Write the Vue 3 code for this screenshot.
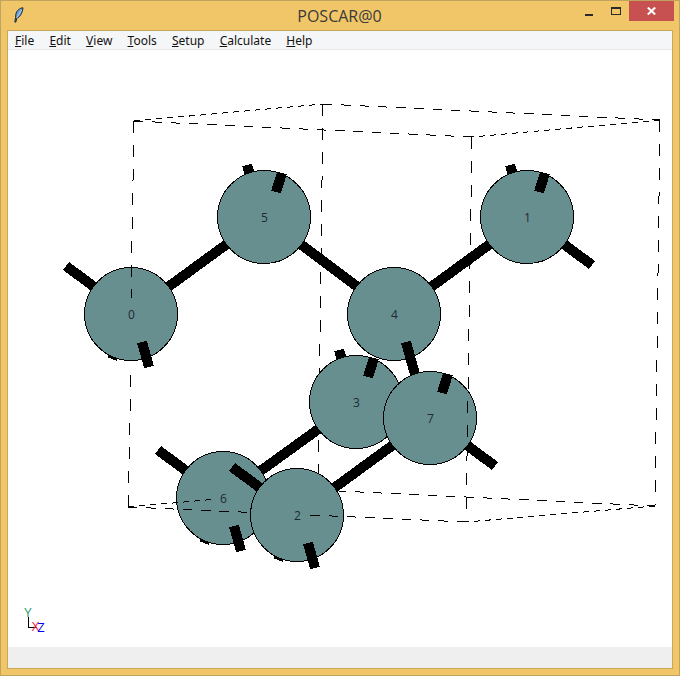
<script setup>
const menus = [
  { key: 'F', rest: 'ile' },
  { key: 'E', rest: 'dit' },
  { key: 'V', rest: 'iew' },
  { key: 'T', rest: 'ools' },
  { key: 'S', rest: 'etup' },
  { key: 'C', rest: 'alculate' },
  { key: 'H', rest: 'elp' },
]

const dash = (a, b, c, d, cls) => ({ t: 'line', x1: a, y1: b, x2: c, y2: d, cls })
const bond = (a, b, c, d) => ({ t: 'line', x1: a, y1: b, x2: c, y2: d, cls: 'bond' })
const atom = (n, x, y) => ({ t: 'atom', n, x, y })
const topStub = (x, y) => [bond(x + 18, y - 44, x + 12, y - 25)]
const backStub = (x, y) => bond(x - 17, y - 52, x - 12, y - 36)
const underStub = (x, y) => bond(x - 19, y + 45, x - 13, y + 30)
const lowStub = (x, y) => [bond(x + 11, y + 28, x + 18, y + 53)]

const scene = [
  dash(323, 104, 318, 490, 'dash-v'),
  dash(318, 490, 655, 506, 'dash-l'),
  dash(134, 121, 323, 104, 'dash-s'),
  dash(323, 104, 660, 120, 'dash-l'),
  dash(134, 121, 472, 137, 'dash-l'),
  dash(660, 120, 472, 137, 'dash-s'),
  dash(660, 120, 655, 506, 'dash-v'),
  dash(655, 506, 466, 522, 'dash-s'),
  dash(128, 507, 131, 373, 'dash-v'),
  backStub(264, 217), backStub(527, 217), backStub(356, 402),
  underStub(131, 314), underStub(223, 498), underStub(297, 515),
  bond(66, 266, 131, 314), bond(131, 314, 264, 217), bond(264, 217, 394, 314),
  bond(394, 314, 527, 217), bond(527, 217, 592, 265), bond(430, 418, 495, 466),
  bond(356, 402, 223, 498), bond(430, 418, 297, 515), bond(158, 450, 223, 498),
  atom(0, 131, 314), ...lowStub(131, 314),
  dash(134, 121, 131, 299, 'dash-v'),
  atom(5, 264, 217), ...topStub(264, 217),
  atom(1, 527, 217), ...topStub(527, 217),
  atom(3, 356, 402), ...topStub(356, 402),
  atom(4, 394, 314), bond(406, 342, 416, 378),
  atom(6, 223, 498), ...lowStub(223, 498),
  dash(128, 507, 214, 499.3, 'dash-s'),
  dash(128, 507, 250, 512.4, 'dash-l'),
  bond(232, 467, 297, 515),
  atom(7, 430, 418), ...topStub(430, 418),
  atom(2, 297, 515), ...lowStub(297, 515),
  dash(466, 522, 310, 515, 'dash-l'),
  dash(472, 137, 466, 522, 'dash-v'),
]
</script>

<template>
  <div class="window">
    <header class="titlebar">
      <svg class="feather" width="10" height="16" viewBox="0 0 10 16">
        <path d="M9 0.8 C5.5 1 2.6 3.5 1.8 7.5 L1.6 10.5 L0.8 15 L1.8 15.2 L2.8 11.2 C6 10 8.2 6.5 9 0.8 Z" fill="#6a9fd8" stroke="#1a2533" stroke-width="1" />
        <path d="M7.5 3 L2.8 11" stroke="#d5e4f5" stroke-width="0.7" fill="none" />
      </svg>
      <div class="title">POSCAR@0</div>
      <div class="controls">
        <div class="ctl min"><span class="min-bar"></span></div>
        <div class="ctl max"><span class="max-box"></span></div>
        <div class="ctl close">
          <svg width="9" height="8" viewBox="0 0 9 8">
            <path d="M0.8 0.5 L8.2 7.5 M8.2 0.5 L0.8 7.5" stroke="#fff" stroke-width="2" fill="none" />
          </svg>
        </div>
      </div>
    </header>
    <div class="client">
      <nav class="menubar">
        <span v-for="m in menus" :key="m.key" class="menu"><u>{{ m.key }}</u>{{ m.rest }}</span>
      </nav>
      <svg class="canvas" width="664" height="597" viewBox="8 50 664 597">
        <template v-for="(s, i) in scene" :key="i">
          <line v-if="s.t === 'line'" :x1="s.x1" :y1="s.y1" :x2="s.x2" :y2="s.y2" :class="s.cls" />
          <g v-else>
            <circle :cx="s.x" :cy="s.y" r="46.5" class="atom" />
            <text :x="s.x + 0.5" :y="s.y + 4.5" class="label">{{ s.n }}</text>
          </g>
        </template>
        <line x1="28.5" y1="617" x2="28.5" y2="627" class="axis" />
        <line x1="28" y1="627.5" x2="37" y2="627.5" class="axis" />
        <text x="28" y="617" class="ax ax-y">Y</text>
        <text x="35.5" y="631" class="ax ax-x">X</text>
        <text x="41" y="632" class="ax ax-z">Z</text>
      </svg>
      <footer class="status"></footer>
    </div>
  </div>
</template>

<style scoped>
.window {
  width: 680px;
  height: 676px;
  box-sizing: border-box;
  background: #f0c669;
  border: 1px solid #c0a45e;
  display: flex;
  flex-direction: column;
  overflow: hidden;
}
.titlebar {
  height: 29px;
  flex: none;
  display: grid;
  grid-template-columns: 1fr auto 1fr;
  padding-right: 5px;
  align-items: start;
}
.feather {
  margin: 6px 0 0 13px;
}
.title {
  font-family: "Open Sans", sans-serif;
  font-size: 16px;
  color: #3a3a38;
  line-height: 30px;
  padding-left: 4px;
}
.controls {
  display: flex;
  justify-content: flex-end;
}
.ctl {
  height: 20px;
  display: flex;
  align-items: center;
  justify-content: center;
}
.min { width: 27px; }
.max { width: 30px; }
.close {
  width: 45px;
  background: #c75050;
}
.min-bar {
  width: 8px;
  height: 2px;
  background: #2a2a2a;
  margin-top: 7px;
  margin-left: 7px;
}
.max-box {
  width: 8px;
  height: 5px;
  box-sizing: content-box;
  border: 1px solid #2a2a2a;
  border-top-width: 2px;
  margin-left: 4px;
}
.client {
  margin: 0 6px 6px;
  flex: 1;
  border: 1px solid #c7a85a;
  display: flex;
  flex-direction: column;
  background: #fff;
}
.menubar {
  height: 18px;
  flex: none;
  display: flex;
  background: #f5f6f7;
  border-bottom: 1px solid #e8e8e8;
  padding-left: 7px;
  font-family: "Noto Sans", sans-serif;
  font-size: 12px;
  line-height: 19px;
  color: #111;
}
.menu { margin-right: 15.2px; }
.canvas {
  display: block;
  flex: none;
  background: #fff;
  shape-rendering: crispEdges;
}
.status {
  flex: 1;
  background: #efefef;
}
.bond {
  stroke: #000;
  stroke-width: 10;
}
.atom {
  fill: #678f8f;
  stroke: #000;
  stroke-width: 1;
  shape-rendering: crispEdges;
}
.dash-v, .dash-l, .dash-s {
  stroke: #000;
  stroke-width: 1;
}
.dash-v { stroke-dasharray: 12 12; }
.dash-l { stroke-dasharray: 9.5 8.8; }
.dash-s { stroke-dasharray: 6 5; }
.label {
  font-family: "Open Sans", sans-serif;
  font-size: 12px;
  fill: #1c2a34;
  text-anchor: middle;
}
.axis {
  stroke: #000;
  stroke-width: 1;
}
.ax {
  font-family: "Open Sans", sans-serif;
  font-size: 13px;
  text-anchor: middle;
}
.ax-y { fill: #1f9a70; }
.ax-x { fill: #ee2244; }
.ax-z { fill: #0000ee; }
</style>
